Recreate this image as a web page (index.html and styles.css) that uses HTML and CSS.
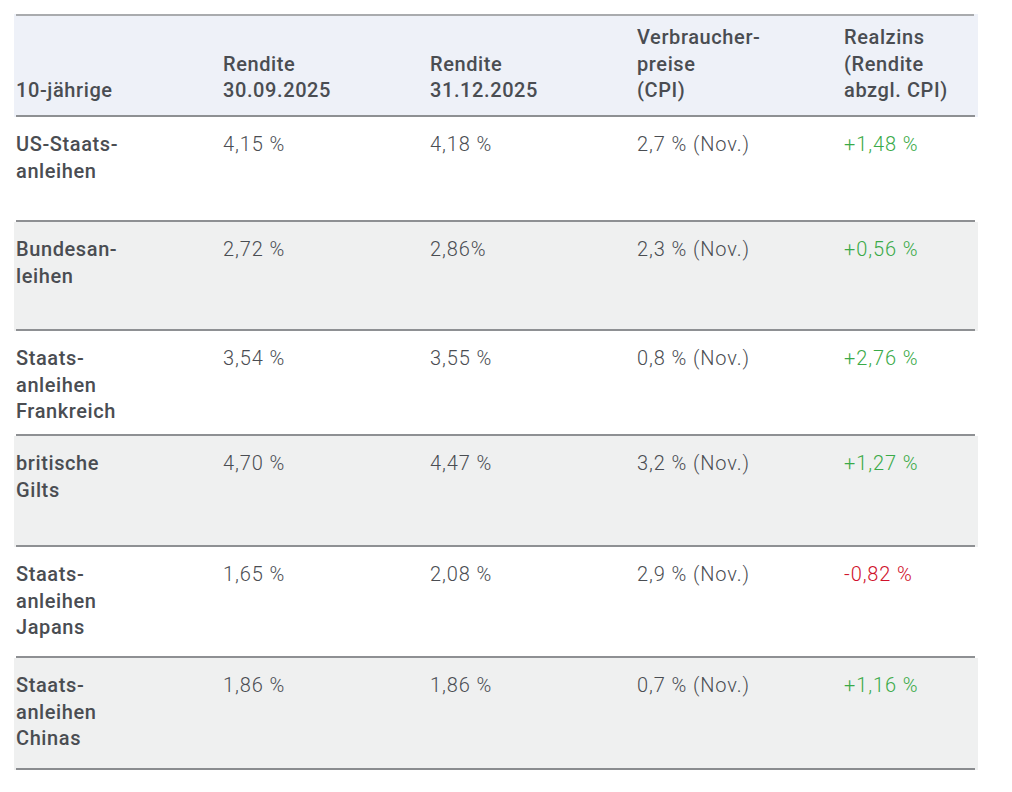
FILE: index.html
```html
<!DOCTYPE html>
<html lang="de">
<head>
<meta charset="utf-8">
<title>Renditen 10-jähriger Staatsanleihen</title>
<link rel="stylesheet" href="styles.css">
</head>
<body>
<div class="table">
  <div class="row head">
    <div class="cell">10-jährige</div>
    <div class="cell">Rendite<br>30.09.2025</div>
    <div class="cell">Rendite<br>31.12.2025</div>
    <div class="cell">Verbraucher-<br>preise<br>(CPI)</div>
    <div class="cell">Realzins<br>(Rendite<br>abzgl. CPI)</div>
  </div>
  <div class="row r1">
    <div class="cell name">US-Staats-<br>anleihen</div>
    <div class="cell">4,15 %</div>
    <div class="cell">4,18 %</div>
    <div class="cell">2,7 % (Nov.)</div>
    <div class="cell pos">+1,48 %</div>
  </div>
  <div class="row r2 alt">
    <div class="cell name">Bundesan-<br>leihen</div>
    <div class="cell">2,72 %</div>
    <div class="cell">2,86%</div>
    <div class="cell">2,3 % (Nov.)</div>
    <div class="cell pos">+0,56 %</div>
  </div>
  <div class="row r3">
    <div class="cell name">Staats-<br>anleihen<br>Frankreich</div>
    <div class="cell">3,54 %</div>
    <div class="cell">3,55 %</div>
    <div class="cell">0,8 % (Nov.)</div>
    <div class="cell pos">+2,76 %</div>
  </div>
  <div class="row r4 alt">
    <div class="cell name">britische<br>Gilts</div>
    <div class="cell">4,70 %</div>
    <div class="cell">4,47 %</div>
    <div class="cell">3,2 % (Nov.)</div>
    <div class="cell pos">+1,27 %</div>
  </div>
  <div class="row r5">
    <div class="cell name">Staats-<br>anleihen<br>Japans</div>
    <div class="cell">1,65 %</div>
    <div class="cell">2,08 %</div>
    <div class="cell">2,9 % (Nov.)</div>
    <div class="cell neg">-0,82 %</div>
  </div>
  <div class="row r6 alt last">
    <div class="cell name">Staats-<br>anleihen<br>Chinas</div>
    <div class="cell">1,86 %</div>
    <div class="cell">1,86 %</div>
    <div class="cell">0,7 % (Nov.)</div>
    <div class="cell pos">+1,16 %</div>
  </div>
</div>
</body>
</html>
```
FILE: styles.css
```css
html, body {
  margin: 0;
  padding: 0;
  background: #ffffff;
}

body {
  font-family: Roboto, "Liberation Sans", sans-serif;
  color: #4a4d52;
  font-size: 20px;
  line-height: 26.6px;
  letter-spacing: 0.9px;
}

.table {
  margin: 14px 0 0 14px;
  width: 964px;
}

.row {
  display: grid;
  grid-template-columns: 207px 207px 207px 207px 136px;
  position: relative;
  box-sizing: border-box;
}

.row::after {
  content: "";
  position: absolute;
  left: 2px;
  right: 3px;
  bottom: 0;
  height: 2px;
  background: #8e9093;
}

.cell {
  padding: 0 2px;
  font-weight: 300;
}

.head {
  background: #eef1f8;
  height: 103px;
  align-items: end;
  padding-bottom: 13px;
}

.head::before {
  content: "";
  position: absolute;
  left: 2px;
  right: 4px;
  top: 0;
  height: 2px;
  background: #a9abae;
}

.head .cell,
.name {
  font-weight: 500;
  letter-spacing: 0.6px;
}

.row:not(.head) {
  padding-top: 14px;
  align-items: start;
}

.alt {
  background: #eff0f0;
}

.r1 { height: 105px; }
.r2 { height: 109px; }
.r3 { height: 105px; }
.r4 { height: 111px; }
.r5 { height: 111px; }
.r6 { height: 112px; }

.last::after {
  background: #8a8c8f;
}

.pos {
  color: #3aaa48;
}

.neg {
  color: #d0112b;
}
```
